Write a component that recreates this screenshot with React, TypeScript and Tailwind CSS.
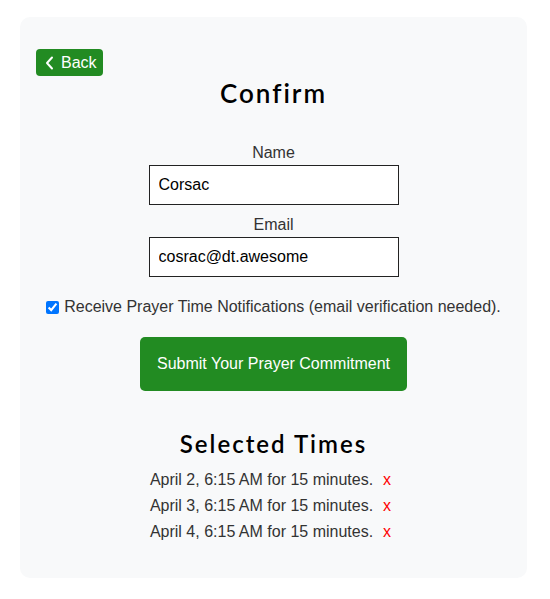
import React, { useState } from "react";

const times = [
  "April 2, 6:15 AM for 15 minutes.",
  "April 3, 6:15 AM for 15 minutes.",
  "April 4, 6:15 AM for 15 minutes.",
];

export default function App() {
  const [name, setName] = useState("Corsac");
  const [email, setEmail] = useState("cosrac@dt.awesome");
  const [notify, setNotify] = useState(true);

  return (
    <div className="min-h-[599px] bg-white pl-5 pr-[23px] pt-[17px] font-['Liberation_Sans',Arial,sans-serif] text-[16px] text-[#333]">
      <div className="rounded-[10px] bg-[#f8f9fa] px-4 pt-8 pb-[33px]">
        <button className="flex h-[27px] w-[67px] items-center gap-[5px] rounded-[4px] bg-[#228b22] pl-[8px] text-white">
          <svg width="12" height="16" viewBox="0 0 12 16" fill="none" stroke="white" strokeWidth="2" strokeLinecap="round" strokeLinejoin="round">
            <path d="M8 2.5 L3 8 L8 13.5" />
          </svg>
          <span>Back</span>
        </button>

        <h1 className="mt-[1px] text-center font-['Lato',sans-serif] text-[26px] leading-[32px] font-semibold tracking-[2px] text-black">
          Confirm
        </h1>

        <div className="mt-[35px] flex flex-col items-center">
          <label className="leading-[18px]">Name</label>
          <input
            value={name}
            onChange={(e) => setName(e.target.value)}
            className="mt-[3px] h-[40px] w-[250px] border border-[#222] bg-white px-[9px] text-black outline-none"
          />
          <label className="mt-[11px] leading-[18px]">Email</label>
          <input
            value={email}
            onChange={(e) => setEmail(e.target.value)}
            className="mt-[3px] h-[40px] w-[250px] border border-[#222] bg-white px-[9px] text-black outline-none"
          />
        </div>

        <label className="mt-[18px] flex items-center justify-center gap-[5px]">
          <input
            type="checkbox"
            checked={notify}
            onChange={(e) => setNotify(e.target.checked)}
            className="h-[13px] w-[13px] accent-[#0075ff]"
          />
          <span>Receive Prayer Time Notifications (email verification needed).</span>
        </label>

        <div className="mt-[18px] flex justify-center">
          <button className="h-[54px] w-[267px] rounded-[5px] bg-[#228b22] text-white">
            Submit Your Prayer Commitment
          </button>
        </div>

        <h2 className="mt-[38px] text-center font-['Lato',sans-serif] text-[24px] leading-[30px] font-semibold tracking-[2px] text-black">
          Selected Times
        </h2>

        <ul className="mt-[8px] flex flex-col items-center">
          {times.map((t) => (
            <li key={t} className="flex h-[26px] items-center gap-[10px] pr-[6px]">
              <span>{t}</span>
              <span className="text-[#ff0000]">x</span>
            </li>
          ))}
        </ul>
      </div>
    </div>
  );
}
